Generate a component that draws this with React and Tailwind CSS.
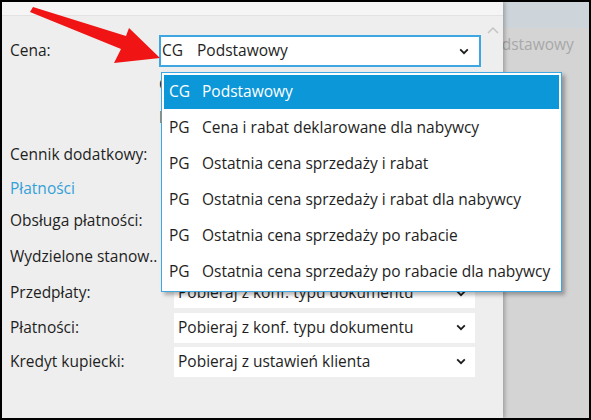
import { useState } from 'react'

const options = [
  { code: 'CG', label: 'Podstawowy' },
  { code: 'PG', label: 'Cena i rabat deklarowane dla nabywcy' },
  { code: 'PG', label: 'Ostatnia cena sprzedaży i rabat' },
  { code: 'PG', label: 'Ostatnia cena sprzedaży i rabat dla nabywcy' },
  { code: 'PG', label: 'Ostatnia cena sprzedaży po rabacie' },
  { code: 'PG', label: 'Ostatnia cena sprzedaży po rabacie dla nabywcy' },
]

function Chevron({ className = '' }) {
  return (
    <svg width="10" height="7" viewBox="0 0 10 7" className={className}>
      <path d="M1.2 1.4 L5 5.2 L8.8 1.4" fill="none" stroke="#1b1b1b" strokeWidth="1.8" />
    </svg>
  )
}

function Field({ text }) {
  return (
    <div className="w-[301px] h-[30px] bg-white flex items-center justify-between pl-[4px] pr-[9px]">
      <span className="whitespace-nowrap">{text}</span>
      <Chevron />
    </div>
  )
}

function Row({ label, className = '', children }) {
  return (
    <div className={`flex items-center ${className}`}>
      <div className="w-[164px] shrink-0 whitespace-nowrap">{label}</div>
      {children}
    </div>
  )
}

export default function App() {
  const [selected] = useState(0)

  return (
    <div className="relative w-[591px] h-[420px] border-2 border-black flex overflow-hidden text-[15.5px] text-[#1e1e1e] font-['Open_Sans',sans-serif]">
      {/* lewy panel z formularzem */}
      <div className="relative z-10 w-[501px] shrink-0 bg-[#eeeeee] shadow-[2px_0_4px_rgba(0,0,0,0.25)] flex flex-col">
        <div className="h-[14px] bg-[#f5f5f5] border-b border-[#e2e2e2]" />
        <div className="flex justify-end pr-[4px] h-[0px]">
          <svg width="12" height="8" viewBox="0 0 12 8" className="mt-[10px]">
            <path d="M1 7 L6 2 L11 7" fill="none" stroke="#c4c4c4" strokeWidth="1.5" />
          </svg>
        </div>
        <div className="flex flex-col pl-[8px] pt-[18px]">
          <Row label="Cena:" className="h-[34px]">
            <div className="ml-[-15px] w-[322px] h-[32px] bg-white border-2 border-[#3ea6e0] flex items-center justify-between pl-[1px] pr-[10px]">
              <span className="flex whitespace-nowrap">
                <span className="w-[35px]">CG</span>
                <span>Podstawowy</span>
              </span>
              <Chevron />
            </div>
          </Row>
          <Row label="" className="h-[34px]">
            <span className="ml-[-15px] w-[4px] overflow-hidden">C</span>
          </Row>
          <Row label="" className="h-[32px]">
            <span className="ml-[-15px] w-[4px] overflow-hidden">D</span>
          </Row>
          <Row label="Cennik dodatkowy:" className="h-[42px]">
            <Field text="" />
          </Row>
          <div className="h-[26px] flex items-center text-[#34a0d8]">Płatności</div>
          <Row label="Obsługa płatności:" className="h-[36px] mt-[1px]">
            <Field text="" />
          </Row>
          <Row label="Wydzielone stanow.." className="h-[36px]">
            <Field text="" />
          </Row>
          <Row label="Przedpłaty:" className="h-[36px]">
            <Field text="Pobieraj z konf. typu dokumentu" />
          </Row>
          <Row label="Płatności:" className="h-[33px]">
            <Field text="Pobieraj z konf. typu dokumentu" />
          </Row>
          <Row label="Kredyt kupiecki:" className="h-[35px]">
            <Field text="Pobieraj z ustawień klienta" />
          </Row>
        </div>
      </div>

      {/* prawy panel */}
      <div className="flex-1 bg-[#d4d4d4] flex flex-col overflow-hidden">
        <div className="h-[26px] bg-[#cdd5da]" />
        <div className="h-[34px] flex items-center ml-[-20px] text-[#a8a8a8] whitespace-nowrap">Podstawowy</div>
      </div>

      {/* rozwinięta lista */}
      <div className="absolute z-20 left-[159px] top-[70px] w-[401px] bg-white border border-[#3ea6e0] p-[2px] flex flex-col gap-[2px] shadow-[3px_3px_4px_rgba(0,0,0,0.3)]">
        {options.map((o, i) => (
          <div
            key={i}
            className={`h-[34px] flex items-center pl-[5px] whitespace-nowrap ${i === selected ? 'bg-[#0c97d9] text-white' : ''}`}
          >
            <span className="w-[33px]">{o.code}</span>
            <span>{o.label}</span>
          </div>
        ))}
      </div>

      {/* strzałka */}
      <svg className="absolute z-30 left-0 top-0" width="591" height="420" viewBox="0 0 591 420">
        <polygon
          points="31,5 124,34 127,26 158,56 112,61 119,47 28,10"
          fill="#f01414"
        />
      </svg>
    </div>
  )
}
